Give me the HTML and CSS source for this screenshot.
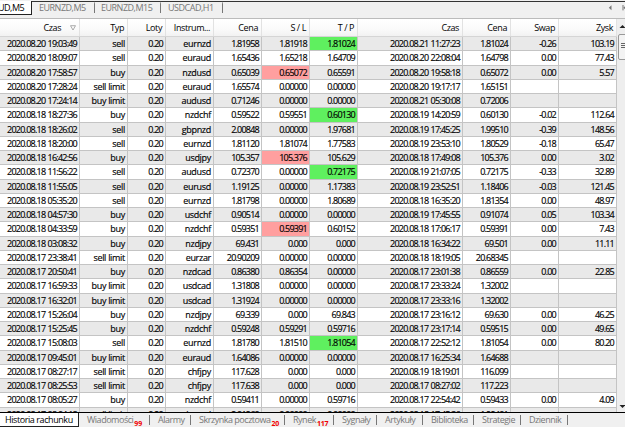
FILE: index.html
```html
<!DOCTYPE html>
<html lang="pl">
<head>
    <meta charset="UTF-8">
    <meta name="viewport" content="width=device-width, initial-scale=1.0">
    <title>Historia rachunku</title>
    <link rel="stylesheet" href="styles.css">
</head>
<body>

    <!-- Chart tabs -->
    <nav class="chart-tabs">
        <span class="chart-tab active">UD,M5</span>
        <span class="chart-tab t1">EURNZD,M5</span>
        <span class="chart-tab t2">EURNZD,M15</span>
        <span class="chart-tab t3">USDCAD,H1</span>
        <svg class="tab-arrows" width="18" height="8" viewBox="0 0 18 8">
            <path d="M3.5 1.2v5L.8 3.7z" fill="#777"/>
            <path d="M15 1v5.4" stroke="#777"/>
            <path d="M18 1.2v5l-2.6-2.5z" fill="#777"/>
        </svg>
    </nav>

    <!-- Account history -->
    <main class="history">
        <table>
            <thead>
                <tr>
                    <th class="sorted">Czas <svg width="6" height="6" viewBox="0 0 6 6"><path d="M.5.7h5L3 5z" fill="none" stroke="#888" stroke-width=".7"/></svg></th>
                    <th>Typ</th>
                    <th>Loty</th>
                    <th>Instrum...</th>
                    <th>Cena</th>
                    <th>S / L</th>
                    <th>T / P</th>
                    <th>Czas</th>
                    <th>Cena</th>
                    <th>Swap</th>
                    <th>Zysk</th>
                </tr>
            </thead>
            <tbody id="rows"></tbody>
        </table>
        <div class="scrollbar">
            <svg width="7" height="5" viewBox="0 0 7 5"><path d="M1.5 4L4.5 1l3 3z" fill="#222"/></svg>
            <div class="thumb"><i></i><i></i><i></i></div>
            <svg class="down" width="7" height="5" viewBox="0 0 7 5"><path d="M1.5 1l3 3 3-3z" fill="#222"/></svg>
        </div>
    </main>

    <!-- Terminal tabs -->
    <footer class="terminal-tabs">
        <span class="tab active">Historia rachunku</span>
        <span class="tab w1">Wiadomości<sub>99</sub></span>
        <span class="tab w2">Alarmy</span>
        <span class="tab w3">Skrzynka pocztowa<sub>20</sub></span>
        <span class="tab w4">Rynek<sub>117</sub></span>
        <span class="tab w5">Sygnały</span>
        <span class="tab w6">Artykuły</span>
        <span class="tab w7">Biblioteka</span>
        <span class="tab w8">Strategie</span>
        <span class="tab w9">Dziennik</span>
    </footer>

    <script>
        // open time, type, symbol, price, S/L, T/P, close time, close price, swap, profit
        // a * marks the level that closed the order
        const orders = [
            '2020.08.20 19:03:49|sell|eurnzd|1.81958|1.81918|*1.81024|2020.08.21 11:27:23|1.81024|-0.26|103.19',
            '2020.08.20 18:09:07|sell|euraud|1.65436|1.65218|1.64709|2020.08.20 22:08:04|1.64798|0.00|77.43',
            '2020.08.20 17:58:57|buy|nzdusd|0.65039|*0.65072|0.65591|2020.08.20 19:58:18|0.65072|0.00|5.57',
            '2020.08.20 17:28:24|sell limit|euraud|1.65574|0.00000|0.00000|2020.08.20 19:17:17|1.65151||',
            '2020.08.20 17:24:14|buy limit|audusd|0.71246|0.00000|0.00000|2020.08.21 05:30:08|0.72006||',
            '2020.08.18 18:27:36|buy|nzdchf|0.59522|0.59551|*0.60130|2020.08.19 14:20:59|0.60130|-0.02|112.64',
            '2020.08.18 18:26:02|sell|gbpnzd|2.00848|0.00000|1.97681|2020.08.19 17:45:25|1.99510|-0.39|148.56',
            '2020.08.18 18:20:00|sell|eurnzd|1.81120|1.81074|1.77583|2020.08.19 23:53:10|1.80529|-0.18|65.47',
            '2020.08.18 16:42:56|buy|usdjpy|105.357|*105.376|105.629|2020.08.18 17:49:08|105.376|0.00|3.02',
            '2020.08.18 11:56:22|sell|audusd|0.72370|0.00000|*0.72175|2020.08.19 21:07:05|0.72175|-0.33|32.89',
            '2020.08.18 11:55:05|sell|eurusd|1.19125|0.00000|1.17383|2020.08.19 23:52:51|1.18406|-0.03|121.45',
            '2020.08.18 05:35:20|sell|eurnzd|1.81798|0.00000|1.80689|2020.08.18 16:35:20|1.81354|0.00|48.97',
            '2020.08.18 04:57:30|buy|usdchf|0.90514|0.00000|0.00000|2020.08.19 17:45:55|0.91074|0.05|103.34',
            '2020.08.18 04:33:59|buy|nzdchf|0.59351|*0.59391|0.60152|2020.08.18 17:06:17|0.59391|0.00|7.43',
            '2020.08.18 03:08:32|buy|nzdjpy|69.431|0.000|0.000|2020.08.18 16:34:22|69.501|0.00|11.11',
            '2020.08.17 23:38:41|sell limit|eurzar|20.90209|0.00000|0.00000|2020.08.18 18:19:05|20.68345||',
            '2020.08.17 20:50:41|buy|nzdcad|0.86380|0.86354|0.00000|2020.08.17 23:01:38|0.86559|0.00|22.85',
            '2020.08.17 16:59:33|buy limit|usdcad|1.31808|0.00000|0.00000|2020.08.17 23:33:24|1.32002||',
            '2020.08.17 16:32:01|buy limit|usdcad|1.31924|0.00000|0.00000|2020.08.17 23:33:16|1.32002||',
            '2020.08.17 15:26:04|buy|nzdjpy|69.339|0.000|69.843|2020.08.17 23:16:12|69.630|0.00|46.25',
            '2020.08.17 15:25:45|buy|nzdchf|0.59248|0.59291|0.59716|2020.08.17 23:17:14|0.59515|0.00|49.65',
            '2020.08.17 15:08:03|sell|eurnzd|1.81780|1.81510|*1.81054|2020.08.17 22:52:12|1.81054|0.00|80.20',
            '2020.08.17 09:45:01|buy limit|euraud|1.64086|0.00000|0.00000|2020.08.17 16:25:34|1.64688||',
            '2020.08.17 08:27:17|sell limit|chfjpy|117.628|0.000|0.000|2020.08.19 18:19:01|116.099||',
            '2020.08.17 08:25:53|sell limit|chfjpy|117.638|0.000|0.000|2020.08.17 08:27:02|117.223||',
            '2020.08.17 08:05:27|buy|nzdchf|0.59411|0.00000|0.59716|2020.08.17 22:54:42|0.59433|0.00|4.09',
            '2020.08.17 08:04:18|sell limit|gbpnzd|2.01260|0.00000|0.00000|2020.08.18 17:45:36|1.99401||'
        ];

        const body = document.getElementById('rows');

        orders.forEach(function(line) {
            const cells = line.split('|');
            cells.splice(2, 0, '0.20');
            const tr = document.createElement('tr');

            cells.forEach(function(value, i) {
                const td = document.createElement('td');
                if (value[0] === '*') {
                    td.className = i === 5 ? 'hit-sl' : 'hit-tp';
                    value = value.slice(1);
                }
                if (i === 1 || i === 3) {
                    td.className = 'word';
                }
                td.textContent = value;
                tr.appendChild(td);
            });

            body.appendChild(tr);
        });
    </script>

</body>
</html>
```
FILE: styles.css
```css
* {
    box-sizing: border-box;
}

body {
    margin: 0;
    width: 625px;
    height: 427px;
    overflow: hidden;
    display: flex;
    flex-direction: column;
    background: #f0f0f0;
    color: #000;
    font-family: "Open Sans", "Noto Sans", sans-serif;
    font-size: 9px;
    white-space: nowrap;
}

/* Chart tabs */
.chart-tabs {
    display: flex;
    flex: none;
    height: 19px;
    padding-top: 1px;
    border-bottom: 1px solid #bbb;
    background: linear-gradient(#333 0 1px, #f0f0f0 1px) 0 1px no-repeat;
    color: #777;
    letter-spacing: -.5px;
}

.chart-tab {
    height: 12px;
    margin-right: 7px;
    border-right: 1px solid #777;
    border-top: 3px solid transparent;
    line-height: 8px;
}

.chart-tab.active {
    width: 32px;
    height: 14px;
    border: 0;
    border-right: 1px solid #222;
    border-bottom: 1px solid #222;
    background: #fff;
    color: #000;
    line-height: 13px;
    text-indent: -2px;
}

.t1 { width: 56px; margin-right: 6px; }
.t2 { width: 60px; }
.t3 { width: 55px; }

.tab-arrows {
    margin: 3px -1px 0 auto;
}

/* History table */
.history {
    display: flex;
    flex: none;
    height: 393px;
    overflow: hidden;
}

table {
    display: block;
    width: 617px;
    flex: none;
    border-spacing: 0;
}

thead, tbody {
    display: block;
}

tr {
    display: grid;
    grid-template-columns: 80px 48px 38px 48px 48px 48px 48px 105px 48px 48px 58px;
    height: 14.26px;
}

th, td {
    display: block;
    padding: 0 2px 0 0;
    border-right: 1px solid #c4c4c4;
    text-align: right;
}

thead tr {
    height: 18px;
    background: linear-gradient(#fff, #fafafa 60%, #f2f2f2);
    border-bottom: 1px solid #d5d5d5;
}

th {
    padding-right: 3px;
    border-color: #e2e2e2;
    font-weight: normal;
    line-height: 17px;
    letter-spacing: -.4px;
}

th.sorted svg {
    margin-left: 7px;
}

td {
    border-bottom: 1px solid #c4c4c4;
    background: #fff;
    line-height: 13px;
    letter-spacing: -.77px;
    word-spacing: .7px;
    -webkit-text-stroke: .15px #000;
}

td.word {
    letter-spacing: -.3px;
    word-spacing: 0;
}

tr:nth-child(odd) td {
    background: #e9e9e9;
}

tr:nth-child(n) td.hit-sl {
    background: #ff9f9f;
}

tr:nth-child(n) td.hit-tp {
    background: #5ff05f;
}

/* Scrollbar */
.scrollbar {
    display: flex;
    flex-direction: column;
    width: 8px;
    padding: 5px 0 3px 1px;
    background: #eee;
}

.thumb {
    width: 10px;
    height: 26px;
    margin-top: 5px;
    padding: 8px 0 0 2px;
    border: 1px solid #999;
    border-radius: 2px;
    background: #f3f3f3;
}

.thumb i {
    display: block;
    height: 1px;
    margin-bottom: 1px;
    background: #666;
}

.down {
    margin-top: auto;
}

/* Terminal tabs */
.terminal-tabs {
    display: flex;
    flex: 1;
    border-top: 1px solid #000;
    color: #777;
    letter-spacing: -.48px;
}

.tab {
    height: 10px;
    margin-top: 2px;
    padding-left: 8px;
    border-right: 1px solid #777;
    line-height: 9px;
}

.tab.active {
    width: 79px;
    height: 14px;
    margin: 0;
    padding-left: 5px;
    border-right: 1px solid #222;
    border-bottom: 1px solid #222;
    background: #fff;
    color: #000;
    line-height: 13px;
    letter-spacing: -.42px;
}

.tab sub {
    margin-left: 1px;
    color: #f00000;
    font-size: 7px;
    font-weight: bold;
    line-height: 0;
    letter-spacing: -.2px;
}

.w1 { width: 71px; }
.w2 { width: 41px; }
.w3 { width: 94px; }
.w4 { width: 49px; }
.w5 { width: 43px; }
.w6 { width: 46px; }
.w7 { width: 51px; }
.w8 { width: 47px; }
.w9 { width: 47px; }
```
